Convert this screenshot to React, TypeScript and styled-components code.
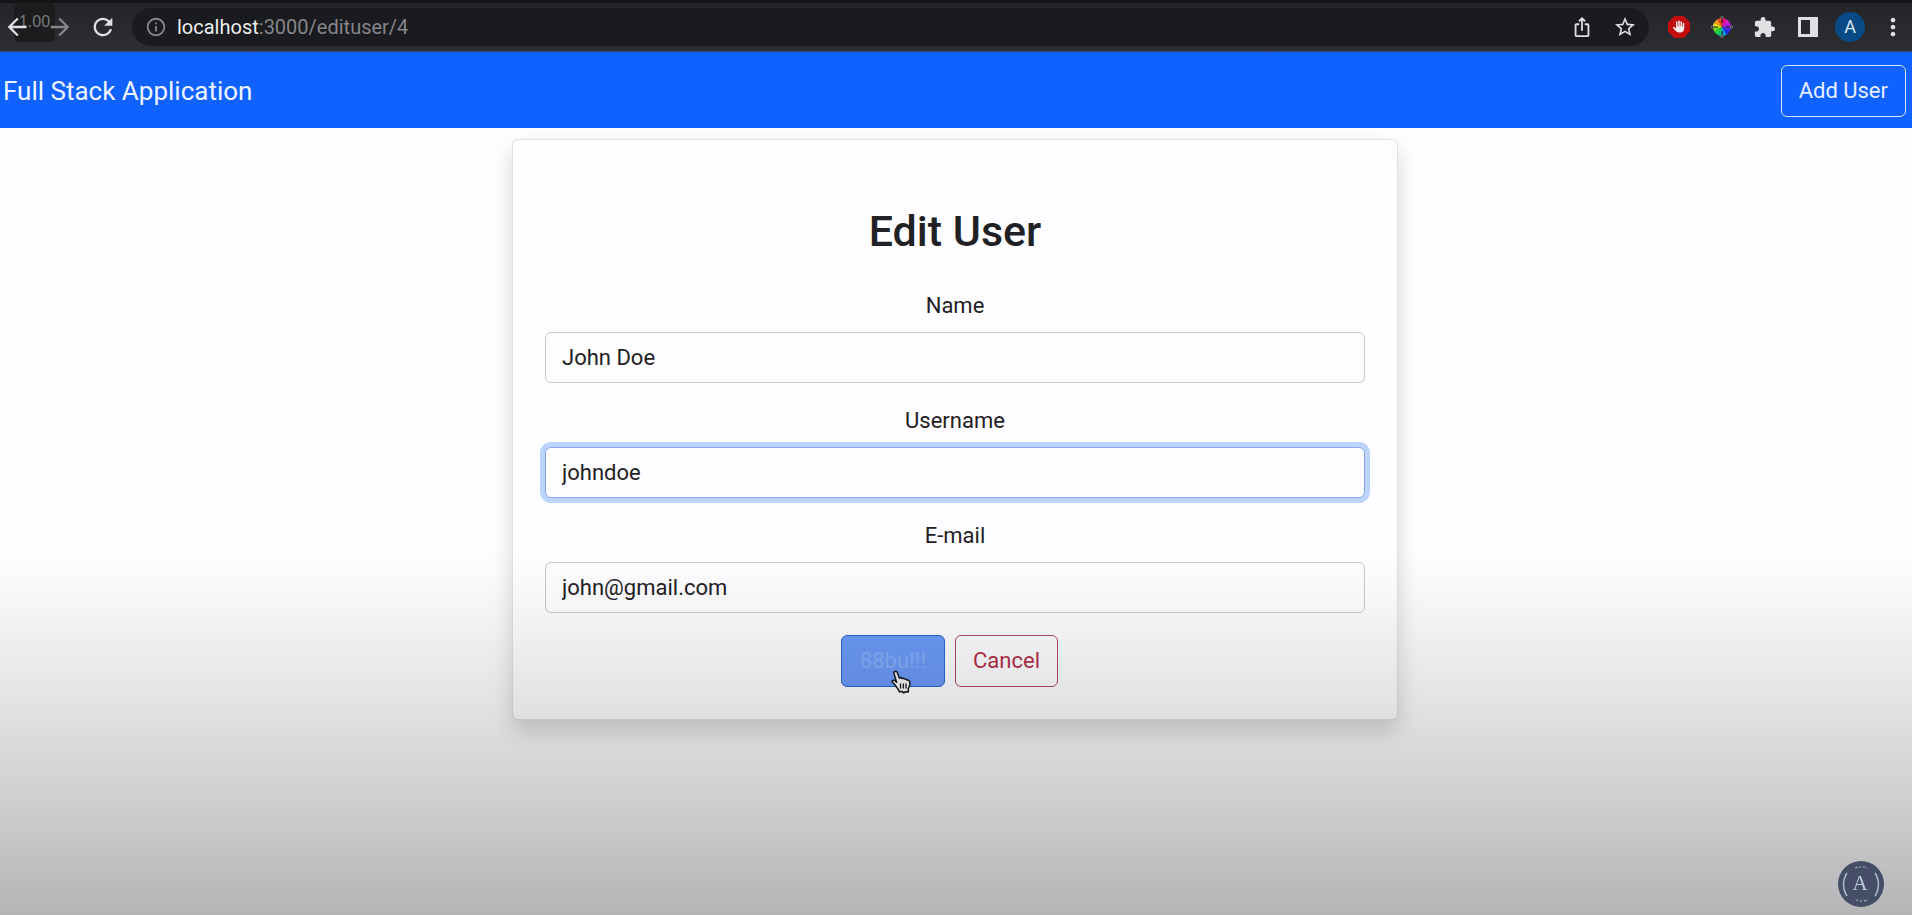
import React from "react";
import styled, { createGlobalStyle, css } from "styled-components";
import {
  MdArrowBack,
  MdArrowForward,
  MdRefresh,
  MdInfoOutline,
  MdIosShare,
  MdStarBorder,
  MdExtension,
  MdMoreVert,
} from "react-icons/md";
import { FaHand } from "react-icons/fa6";

const GlobalStyle = createGlobalStyle`
  *, *::before, *::after { box-sizing: border-box; }
  html { height: 100%; }
  body {
    margin: 0;
    min-height: 100%;
    background: #fefdff;
    color: #1f2124;
    font-family: Roboto, Inter, "Liberation Sans", sans-serif;
    font-size: 22px;
    line-height: 32px;
  }
`;

const Page = styled.div`
  min-height: 100vh;
  display: flex;
  flex-direction: column;
`;

const BrowserBar = styled.header`
  position: relative;
  display: flex;
  align-items: center;
  gap: 14px;
  height: 52px;
  padding: 0 4px 0 1px;
  border-top: 3px solid #141517;
  border-bottom: 1px solid #38486a;
  background: linear-gradient(#252529, #2d2e31);
`;

const IconGroup = styled.div`
  position: relative;
  display: flex;
  align-items: center;
  gap: 12px;
`;

const IconButton = styled.button<{ $muted?: boolean; $size?: number }>`
  display: flex;
  align-items: center;
  justify-content: center;
  width: 31px;
  height: 31px;
  padding: 0;
  border: 0;
  background: none;
  color: ${(p) => (p.$muted ? "#85868a" : "#dfe0e2")};
  flex: none;

  svg {
    width: ${(p) => p.$size ?? 28}px;
    height: ${(p) => p.$size ?? 28}px;
    flex: none;
  }
`;

const AddressBar = styled.div`
  flex: 1;
  display: flex;
  align-items: center;
  height: 38px;
  padding: 0 9px 0 8px;
  border-radius: 19px;
  background: #1a1b1e;
`;

const Url = styled.div`
  flex: 1;
  margin-left: 6px;
  color: #85868a;
  font-size: 20px;
  line-height: 24px;

  b {
    color: #eceded;
    font-weight: 400;
  }
`;

const Avatar = styled.button`
  width: 30px;
  height: 30px;
  padding: 0;
  border: 0;
  border-radius: 50%;
  background: #084a86;
  color: #dce6f0;
  font: 400 18px/30px Roboto, sans-serif;
`;

const SpeedOverlay = styled.div`
  position: absolute;
  left: 14px;
  top: 0;
  width: 41px;
  height: 39px;
  border-radius: 6px;
  background: #1c1c1f;
  color: #77787a;
  font: 400 16px/38px "Liberation Sans", sans-serif;
  text-align: center;
`;

const NavBar = styled.nav`
  display: flex;
  align-items: center;
  justify-content: space-between;
  height: 76px;
  padding: 2px 6px 0 3px;
  background: #0f62fe;
`;

const Brand = styled.a`
  color: #eef4ff;
  font-size: 26px;
  text-decoration: none;
`;

const buttonBase = css`
  display: inline-flex;
  align-items: center;
  justify-content: center;
  height: 52px;
  padding: 0 17px;
  border-radius: 6px;
  border: 1px solid;
  font: inherit;
  text-decoration: none;
`;

const AddUserLink = styled.a`
  ${buttonBase}
  border-color: #d5e4ff;
  color: #e6efff;
`;

const Main = styled.main`
  flex: 1;
  padding: 11px 18px 11px 16px;
`;

const Card = styled.form`
  max-width: 886px;
  margin: 0 auto;
  padding: 32px;
  border: 1px solid #dfdfe1;
  border-radius: 6px;
  background: #fefdff;
  box-shadow: 0 11px 22px rgba(0, 0, 0, 0.16);
`;

const Title = styled.h2`
  margin: 33px 32px;
  font-size: 43px;
  line-height: 52px;
  font-weight: 500;
  text-align: center;
`;

const Field = styled.div`
  display: flex;
  flex-direction: column;
  gap: 10px;
  margin-bottom: 22px;
`;

const Label = styled.label`
  text-align: center;
`;

const TextInput = styled.input<{ $active?: boolean }>`
  width: 100%;
  height: 51px;
  padding: 0 16px;
  border: 1px solid ${(p) => (p.$active ? "#86a9e8" : "#c8cacd")};
  border-radius: 6px;
  outline: none;
  background: #fefdff;
  color: #1f2124;
  font: inherit;
  box-shadow: ${(p) => (p.$active ? "0 0 0 5px #bcd3fb" : "none")};
`;

const Actions = styled.div`
  display: flex;
  justify-content: center;
  gap: 10px;
  padding-right: 11px;
`;

const SubmitButton = styled.button`
  ${buttonBase}
  position: relative;
  width: 104px;
  border-color: #2c66d8;
  background: #6c9bf8;
  color: #86aefa;
`;

const CancelLink = styled.a`
  ${buttonBase}
  border-color: #b04a5e;
  color: #b5304a;
`;

const Pointer = styled.svg`
  position: absolute;
  left: 48px;
  top: 34px;
  width: 22px;
  height: 24px;
`;

const BottomShade = styled.div`
  position: fixed;
  inset: auto 0 0 0;
  height: 40vh;
  pointer-events: none;
  background: linear-gradient(
    rgba(0, 0, 0, 0) 0%,
    rgba(0, 0, 0, 0.01) 7%,
    rgba(0, 0, 0, 0.05) 22%,
    rgba(0, 0, 0, 0.11) 43%,
    rgba(0, 0, 0, 0.18) 67%,
    rgba(0, 0, 0, 0.24) 85%,
    rgba(0, 0, 0, 0.285) 100%
  );
`;

const ChannelBadge = styled.svg`
  position: fixed;
  right: 28px;
  bottom: 8px;
  width: 46px;
  height: 46px;
`;

const AdBlockIcon = () => (
  <svg viewBox="0 0 24 24" aria-hidden="true">
    <path d="M7.4 1h9.2L23 7.4v9.2L16.600 23H7.400L1 16.600V7.400z" fill="#c40d0d" />
    <FaHand x={6} y={4} color="#f3eded" style={{ width: 12, height: 15 }} />
  </svg>
);

const wheelColours = [
  "#d81fd0", "#a81fe0", "#5a2be0", "#1a2fe8", "#119bd8", "#12c98a",
  "#1fd83a", "#7ddb1c", "#f2e21c", "#f59a16", "#ef4a1c", "#e8127a",
];

const ColourWheelIcon = () => (
  <svg viewBox="0 0 22 22" aria-hidden="true">
    {wheelColours.map((colour, i) => (
      <path
        key={colour}
        d="M11 11V2a9 9 0 0 1 4.500 1.200z"
        fill={colour}
        transform={`rotate(${(i + 1) * 30} 11 11)`}
      />
    ))}
    <path d="M11 2v5M11 15v5M2 11h5M15 11h5" stroke="#1b1b1d" strokeWidth="1.200" />
    <g fill="#29292c" stroke="#9a9a9a" strokeWidth="0.700">
      <circle cx="11" cy="1.500" r="1.200" />
      <circle cx="20.500" cy="11" r="1.200" />
      <circle cx="11" cy="20.500" r="1.200" />
      <circle cx="1.500" cy="11" r="1.200" />
    </g>
  </svg>
);

const SidePanelIcon = () => (
  <svg viewBox="0 0 20 20" aria-hidden="true">
    <path d="M0 0h20v20H0zM3 3v14h9V3z" fill="currentColor" fillRule="evenodd" />
  </svg>
);

export default function App() {
  return (
    <Page>
      <GlobalStyle />
      <BrowserBar>
        <SpeedOverlay>1.00</SpeedOverlay>
        <IconGroup>
          <IconButton aria-label="Back"><MdArrowBack /></IconButton>
          <IconButton aria-label="Forward" $muted><MdArrowForward /></IconButton>
          <IconButton aria-label="Reload"><MdRefresh /></IconButton>
        </IconGroup>
        <AddressBar>
          <IconButton aria-label="Site information" $muted $size={22}><MdInfoOutline /></IconButton>
          <Url><b>localhost</b>:3000/edituser/4</Url>
          <IconGroup>
            <IconButton aria-label="Share" $size={22}><MdIosShare /></IconButton>
            <IconButton aria-label="Bookmark" $size={24}><MdStarBorder /></IconButton>
          </IconGroup>
        </AddressBar>
        <IconGroup>
          <IconButton aria-label="Ad blocker" $size={24}><AdBlockIcon /></IconButton>
          <IconButton aria-label="Colour picker" $size={22}><ColourWheelIcon /></IconButton>
          <IconButton aria-label="Extensions" $size={23}><MdExtension /></IconButton>
          <IconButton aria-label="Side panel" $size={20}><SidePanelIcon /></IconButton>
          <Avatar>A</Avatar>
          <IconButton aria-label="Menu" $size={28}><MdMoreVert /></IconButton>
        </IconGroup>
      </BrowserBar>

      <NavBar>
        <Brand href="#">Full Stack Application</Brand>
        <AddUserLink href="#">Add User</AddUserLink>
      </NavBar>

      <Main>
        <Card onSubmit={(e) => e.preventDefault()}>
          <Title>Edit User</Title>
          <Field>
            <Label htmlFor="name">Name</Label>
            <TextInput id="name" defaultValue="John Doe" />
          </Field>
          <Field>
            <Label htmlFor="username">Username</Label>
            <TextInput id="username" defaultValue="johndoe" $active />
          </Field>
          <Field>
            <Label htmlFor="email">E-mail</Label>
            <TextInput id="email" defaultValue="john@gmail.com" />
          </Field>
          <Actions>
            <SubmitButton type="submit">
              88bu!!!
              <Pointer viewBox="0 0 22 24" aria-hidden="true">
                <path
                  d="M5 1.500c1-.4 2 .1 2.400 1.200L9.300 8c1-.6 2-.3 2.600.5 1-.5 2-.2 2.600.6 1-.3 2 0 2.500 1 1.600-.3 2.700.6 2.900 2.200.3 2.600-.3 4.300-1.600 6.400v3.400l-3-.4-1.500 1.300-1.600-1.600-3 .3c0-2-1.600-3-2.700-4.600-.9-1.300-2-3.300-3.700-4.600-1.300-1-.4-2.700 1.300-2.200 1 .3 1.700 1 2.500 1.900L4 3.400C3.700 2.500 4.100 1.800 5 1.500z"
                  fill="#f4f4f6"
                  stroke="#17181c"
                  strokeWidth="1.500"
                  strokeLinejoin="round"
                />
                <path d="M10.500 13.500v5M13.300 13.500v5M16 13.500v5" stroke="#17181c" strokeWidth="1.300" />
              </Pointer>
            </SubmitButton>
            <CancelLink href="#">Cancel</CancelLink>
          </Actions>
        </Card>
      </Main>

      <BottomShade />
      <ChannelBadge viewBox="0 0 46 46" role="img" aria-label="Channel">
        <circle cx="23" cy="23" r="23" fill="#454e66" />
        <path d="M9 12a21 21 0 0 0 0 23M37 12a21 21 0 0 1 0 23" fill="none" stroke="#a9bfcc" strokeWidth="1.500" />
        <text x="22" y="29" textAnchor="middle" fill="#b9ced8" fontFamily="Liberation Serif, serif" fontSize="21">A</text>
        <path d="M17 7l3-1M21 6h2M25 6h2M28 7l1 0M18 39l2 .6M22 40h2M26 40l3-1" stroke="#8797a8" strokeWidth="1.500" />
      </ChannelBadge>
    </Page>
  );
}
